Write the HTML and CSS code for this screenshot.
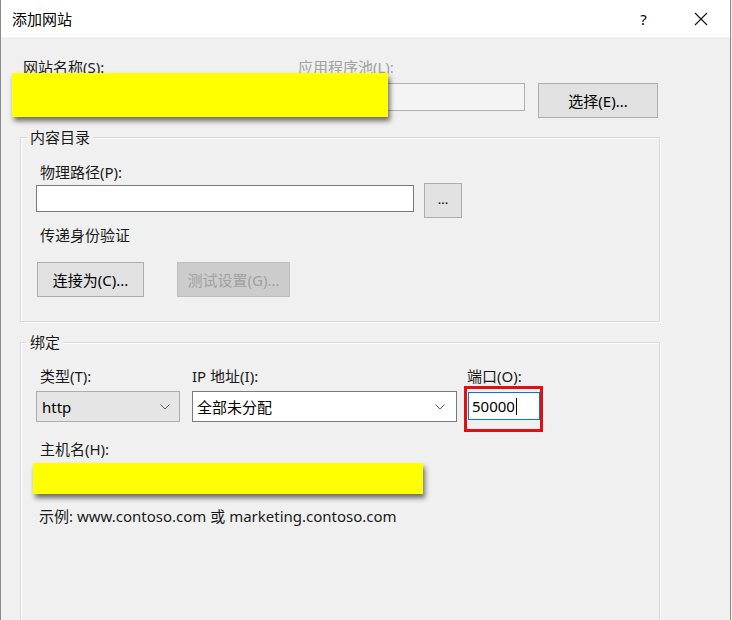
FILE: index.html
```html
<!DOCTYPE html>
<html lang="zh-CN">
<head>
<meta charset="utf-8">
<title>添加网站</title>
<link rel="stylesheet" href="styles.css">
</head>
<body>
<div class="window">
  <div class="titlebar">
    <span class="title">添加网站</span>
    <span class="help">?</span>
    <span class="close">
      <svg width="14" height="14" viewBox="0 0 14 14"><path d="M1 1 L13 13 M13 1 L1 13" stroke="#111" stroke-width="1.1" fill="none"/></svg>
    </span>
  </div>
  <div class="body">
    <div class="site-row">
      <div class="field site-name">
        <div class="label">网站名称(S):</div>
        <div class="textbox site-box"></div>
      </div>
      <div class="field app-pool">
        <div class="label disabled-text">应用程序池(L):</div>
        <div class="pool-row">
          <div class="textbox disabled pool-box"></div>
          <div class="btn select-btn">选择(E)...</div>
        </div>
      </div>
      <div class="redact redact-site"></div>
    </div>

    <fieldset class="group content-group">
      <legend>内容目录</legend>
      <div class="group-inner content-inner">
        <div class="label indent">物理路径(P):</div>
        <div class="path-row">
          <div class="textbox path-box"></div>
          <div class="btn browse-btn">...</div>
        </div>
        <div class="label indent auth-label">传递身份验证</div>
        <div class="auth-row">
          <div class="btn connect-btn">连接为(C)...</div>
          <div class="btn disabled-btn test-btn">测试设置(G)...</div>
        </div>
      </div>
    </fieldset>

    <fieldset class="group binding-group">
      <legend>绑定</legend>
      <div class="group-inner binding-inner">
        <div class="binding-row">
          <div class="field type-field">
            <div class="label indent">类型(T):</div>
            <div class="combo combo-gray">
              <span>http</span>
              <svg class="chev" width="10" height="6" viewBox="0 0 10 6"><path d="M0.5 0.5 L5 5 L9.5 0.5" stroke="#606060" stroke-width="1" fill="none"/></svg>
            </div>
          </div>
          <div class="field ip-field">
            <div class="label">IP 地址(I):</div>
            <div class="combo combo-white">
              <span>全部未分配</span>
              <svg class="chev" width="10" height="6" viewBox="0 0 10 6"><path d="M0.5 0.5 L5 5 L9.5 0.5" stroke="#606060" stroke-width="1" fill="none"/></svg>
            </div>
          </div>
          <div class="field port-field">
            <div class="label port-label">端口(O):</div>
            <div class="port-wrap">
              <div class="textbox port-box"><span>50000</span><span class="caret"></span></div>
              <div class="highlight"></div>
            </div>
          </div>
        </div>
        <div class="label indent host-label">主机名(H):</div>
        <div class="host-wrap">
          <div class="textbox host-box"></div>
          <div class="redact redact-host"></div>
        </div>
        <div class="example">示例: www.contoso.com 或 marketing.contoso.com</div>
      </div>
    </fieldset>
  </div>
</div>
</body>
</html>
```

FILE: styles.css
```css
html, body {
  margin: 0;
  padding: 0;
  background: #f0f0f0;
}
body {
  font-family: "Noto Sans", "Noto Sans CJK SC", sans-serif;
  font-size: 15px;
  color: #1a1a1a;
}
.window {
  width: 731px;
  height: 620px;
  box-sizing: border-box;
  border-left: 1px solid #8a8a8a;
  border-right: 1px solid #8a8a8a;
  background: #f0f0f0;
  display: flex;
  flex-direction: column;
  overflow: hidden;
}
.titlebar {
  height: 37px;
  flex-shrink: 0;
  background: #fff;
  display: flex;
  align-items: center;
  padding: 0 9px 0 11px;
}
.title {
  flex: 1;
  font-size: 15px;
  line-height: 20px;
  color: #000;
}
.help {
  width: 25px;
  text-align: center;
  font-size: 15px;
  line-height: 20px;
  color: #000;
}
.close {
  width: 40px;
  margin-left: 25px;
  display: flex;
  justify-content: center;
}
.body {
  padding: 20px 0 0 19px;
}
.label {
  line-height: 20px;
  height: 20px;
  white-space: nowrap;
}
.indent {
  margin-left: 4px;
}
.disabled-text {
  color: #a0a0a0;
}
.textbox {
  box-sizing: border-box;
  background: #fff;
  border: 1px solid #7a7a7a;
}
.textbox.disabled {
  background: #f4f4f4;
  border-color: #b0b0b0;
}
.btn {
  box-sizing: border-box;
  background: #e1e1e1;
  border: 1px solid #adadad;
  display: flex;
  align-items: center;
  justify-content: center;
  white-space: nowrap;
  color: #000;
}
.disabled-btn {
  background: #cccccc;
  border-color: #bfbfbf;
  color: #a0a0a0;
}

/* first row */
.site-row {
  position: relative;
  display: flex;
  gap: 13px;
  margin-left: 3px;
}
.site-name {
  width: 262px;
}
.field .textbox,
.pool-row {
  margin-top: 6px;
}
.site-box {
  height: 28px;
}
.pool-row {
  display: flex;
  gap: 13px;
  align-items: flex-start;
}
.pool-row .textbox {
  margin-top: 0;
}
.pool-box {
  width: 227px;
  height: 28px;
}
.select-btn {
  width: 120px;
  height: 35px;
}
.redact {
  position: absolute;
  background: #ffff00;
  box-shadow: 2px 4px 5px rgba(0, 0, 0, 0.55);
}
.redact-site {
  left: -11px;
  top: 16px;
  width: 376px;
  height: 44px;
}

/* group boxes */
.group {
  box-sizing: border-box;
  width: 640px;
  margin: 9px 0 0 0;
  padding: 0;
  min-width: 0;
  border: 1px solid #d9d9d9;
  box-shadow: inset 1px 1px 0 #fff, 1px 1px 0 #fff;
}
.group legend {
  margin-left: 6px;
  padding: 0 3px;
  line-height: 20px;
  background: #f0f0f0;
}
.group-inner {
  padding-left: 15px;
}
.content-inner {
  padding-top: 15px;
  padding-bottom: 24px;
}
.path-row {
  margin-top: 1px;
  display: flex;
  gap: 10px;
  align-items: flex-start;
}
.path-box {
  width: 378px;
  height: 27px;
  margin-top: 2px;
}
.browse-btn {
  width: 38px;
  height: 35px;
  font-size: 13px;
  padding-bottom: 3px;
}
.auth-label {
  margin-top: 7px;
}
.auth-row {
  margin-top: 17px;
  display: flex;
  gap: 33px;
}
.connect-btn {
  width: 107px;
  height: 35px;
  margin-left: 1px;
}
.test-btn {
  width: 113px;
  height: 35px;
}

.binding-group {
  margin-top: 10px;
  height: 300px;
}
.binding-inner {
  padding-top: 14px;
}
.binding-row {
  display: flex;
  gap: 12px;
}
.type-field {
  width: 144px;
}
.ip-field {
  width: 265px;
}
.port-field {
  margin-left: -2px;
}
.combo {
  box-sizing: border-box;
  height: 31px;
  margin-top: 5px;
  display: flex;
  align-items: center;
  justify-content: space-between;
  padding: 0 9px 0 5px;
  border: 1px solid #acacac;
  color: #000;
}
.combo-gray {
  background: #e5e5e5;
}
.combo-white {
  background: #fff;
  border-color: #7a7a7a;
  padding-left: 4px;
  padding-right: 11px;
}
.chev {
  display: block;
}
.port-label {
  margin-left: 0;
}
.port-wrap {
  position: relative;
  margin-top: 5px;
  margin-left: 1px;
}
.port-box {
  width: 72px;
  height: 28px;
  border-color: #0078d7;
  display: flex;
  align-items: center;
  padding-left: 3px;
  color: #000;
  margin-top: 0;
}
.caret {
  display: inline-block;
  width: 1px;
  height: 17px;
  background: #000;
  margin-left: 1px;
}
.highlight {
  position: absolute;
  left: -4px;
  top: -6px;
  width: 79px;
  height: 46px;
  box-sizing: border-box;
  border: 3px solid #e01010;
}
.host-label {
  margin-top: 17px;
}
.host-wrap {
  position: relative;
  margin-top: 4px;
}
.host-box {
  width: 378px;
  height: 28px;
}
.redact-host {
  left: -3px;
  top: 0;
  width: 390px;
  height: 31px;
}
.example {
  margin-top: 15px;
  margin-left: 3px;
  line-height: 20px;
  white-space: nowrap;
}
```
